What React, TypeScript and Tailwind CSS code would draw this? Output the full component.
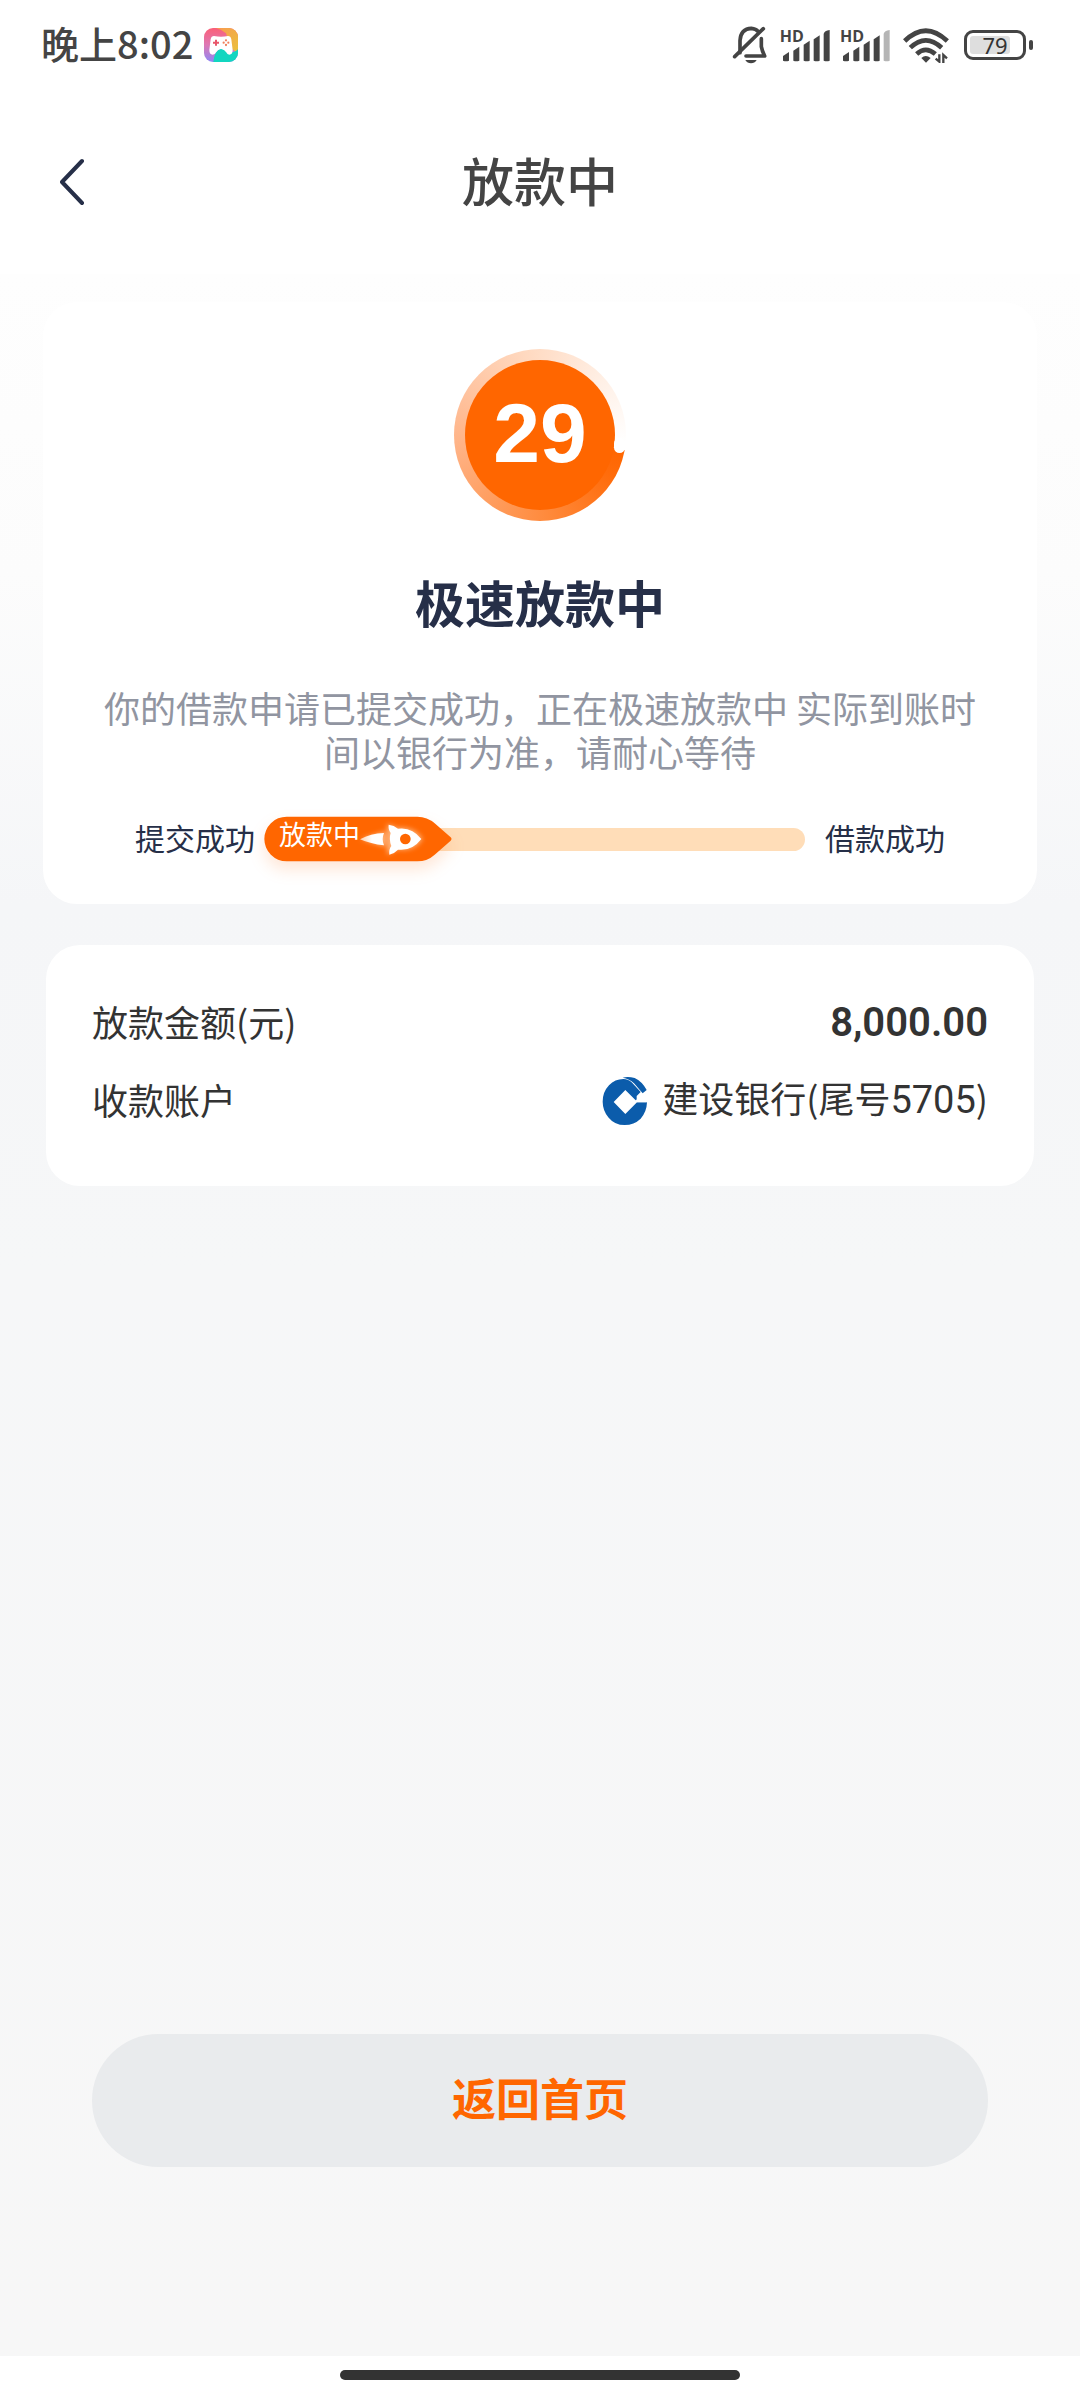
import React from "react";

function GameBadge() {
  return (
    <svg className="h-[34px] w-[34px] rounded-[9px]" viewBox="0 0 102 102" aria-hidden="true">
      <defs>
        <linearGradient id="gb" x1="0" y1="0" x2="0" y2="1">
          <stop offset="0" stopColor="#fb5f78" />
          <stop offset="0.5" stopColor="#dd78b4" />
          <stop offset="1" stopColor="#8f86f5" />
        </linearGradient>
        <linearGradient id="gy" x1="0" y1="0" x2="1" y2="1">
          <stop offset="0" stopColor="#f99a52" />
          <stop offset="1" stopColor="#e9c23c" />
        </linearGradient>
      </defs>
      <rect width="102" height="102" fill="url(#gb)" />
      <path d="M36 0H102V76L80 60L66 16Q52 4 36 0Z" fill="url(#gy)" />
      <path d="M28 102Q32 66 51 63Q68 64 76 74Q92 74 102 64V102Z" fill="#12d6c0" />
      <path
        d="M30 24Q51 28 72 24Q80 24 82 34L86 66Q86 80 76 80Q70 80 66 72Q60 64 51 64Q42 64 37 72Q33 80 26 80Q16 80 16 66L20 34Q22 24 30 24Z"
        fill="#fff"
      />
      <path d="M51 63Q40 66 36 76Q44 84 51 84Q60 84 67 76Q62 66 51 63Z" fill="#12d6c0" />
      <path d="M36 35V53M27 44H45" stroke="#e8566a" strokeWidth="6" />
      <g fill="#f0805c">
        <circle cx="66" cy="37" r="3.4" />
        <circle cx="66" cy="51" r="3.4" />
        <circle cx="59" cy="44" r="3.4" />
        <circle cx="73" cy="44" r="3.4" />
      </g>
    </svg>
  );
}

function BellOff() {
  return (
    <svg className="h-[38px] w-[36px]" viewBox="0 0 108 114" fill="none" aria-hidden="true">
      <path
        d="M24 80V44Q26 8 58 7Q72 8 78 16M88 38V62Q90 74 98 90H42"
        stroke="#444"
        strokeWidth="11"
        strokeLinejoin="round"
        strokeLinecap="round"
      />
      <path d="M8 92L94 8" stroke="#444" strokeWidth="11" strokeLinecap="round" />
      <path d="M40 102H74Q68 112 57 112Q46 112 40 102Z" fill="#444" />
    </svg>
  );
}

function Signal({ last }: { last: string }) {
  return (
    <div className="flex items-start">
      <span className="-mr-[23px] font-['Open_Sans','Noto_Sans',sans-serif] text-[16px] leading-[16px] font-bold text-[#444]">
        HD
      </span>
      <svg className="h-[34px] w-[50px]" viewBox="0 0 150 102" aria-hidden="true">
        <g fill="#444">
          <path d="M6 98V84L24 72V98Q15 101 6 98Z" />
          <path d="M37 98V68L55 56V98Q46 101 37 98Z" />
          <path d="M68 98V50L86 38V98Q77 101 68 98Z" />
          <path d="M98 98V34L116 22V98Q107 101 98 98Z" />
        </g>
        <path d="M128 98V18Q130 8 146 6V98Q137 101 128 98Z" fill={last} />
      </svg>
    </div>
  );
}

function Wifi() {
  return (
    <svg className="h-[36px] w-[46px]" viewBox="0 0 138 108" fill="none" aria-hidden="true">
      <g stroke="#444" strokeWidth="14">
        <path d="M5 42Q68 -20 133 42" />
        <path d="M22 62Q68 18 116 62" />
        <path d="M41 81Q68 56 97 81" />
      </g>
      <path d="M55 93Q68 81 83 93L69 107Z" fill="#444" />
      <path d="M109 82V104L98 95M121 108V84L132 94" stroke="#444" strokeWidth="7" />
    </svg>
  );
}

function Battery() {
  return (
    <div className="ml-[3px] flex items-center gap-[3px]">
      <div className="flex h-[30px] w-[62px] rounded-[9px] border-3 border-[#444] p-[3px]">
        <div className="flex w-[40px] items-center justify-center rounded-[3px] bg-[#dedede] pl-[10px]">
          <span className="font-['Noto_Sans','Open_Sans',sans-serif] text-[22px] leading-[18px] text-[#333]">79</span>
        </div>
      </div>
      <div className="h-[10px] w-[4px] rounded-[2px] bg-[#444]" />
    </div>
  );
}

function StatusBar() {
  return (
    <div className="flex h-[90px] items-center justify-between pr-[47px] pl-[41px]">
      <div className="flex items-center gap-[11px]">
        <span className="pb-1 text-[38px] leading-[44px] font-medium text-[#444]">晚上8:02</span>
        <GameBadge />
      </div>
      <div className="flex items-center gap-[12px]">
        <BellOff />
        <div className="flex gap-[9px]">
          <Signal last="#444" />
          <Signal last="#b5b5b5" />
        </div>
        <Wifi />
        <Battery />
      </div>
    </div>
  );
}

function Countdown() {
  return (
    <div className="flex h-[172px] w-[172px] items-center justify-center rounded-full bg-[conic-gradient(from_100deg,#ff6600_0deg,#ff6c0b_20deg,#ff8a3c_75deg,#ffb488_165deg,#ffd9c0_250deg,#fff0e6_310deg,#ffffff_355deg,#ffffff_360deg)]">
      <div className="relative flex h-[150px] w-[150px] items-center justify-center rounded-full bg-[#ff6600]">
        <div className="absolute top-[78px] -right-[10px] h-[15px] w-[11px] rounded-full bg-white" />
        <span className="pb-1 font-['Liberation_Sans',Arial,sans-serif] text-[84px] leading-[84px] font-bold text-white">
          29
        </span>
      </div>
    </div>
  );
}

function RocketPill() {
  return (
    <div className="relative z-10 -mr-[20px] h-[46px] w-[189px] shrink-0">
      <svg
        className="absolute inset-0 h-[46px] w-[189px] overflow-visible drop-shadow-[0_8px_8px_rgba(255,102,0,0.16)]"
        viewBox="0 0 567 138"
        aria-hidden="true"
      >
        <defs>
          <filter id="glow" x="-50%" y="-50%" width="200%" height="200%">
            <feGaussianBlur stdDeviation="8" />
          </filter>
          <linearGradient id="flame" x1="0" x2="1">
            <stop offset="0" stopColor="#ffd0ac" />
            <stop offset="0.5" stopColor="#fff" />
          </linearGradient>
        </defs>
        <path
          d="M68 2H460Q490 2 512 22L560 64Q565 69 560 74L512 116Q490 136 460 136H68A67 67 0 0 1 68 2Z"
          fill="#ff6600"
        />
        <g filter="url(#glow)" fill="#ffb47c">
          <path d="M290 69L365 46V92Z" />
          <path d="M370 24L400 36Q450 30 476 69Q450 108 400 100L370 116Z" />
        </g>
        <path d="M288 70Q320 52 360 51Q352 70 360 88Q320 84 288 70Z" fill="url(#flame)" />
        <path
          d="M374 26Q390 28 402 38Q444 32 472 69Q444 106 402 101Q392 112 376 116Q374 100 382 90Q374 69 380 51Q372 40 374 26Z"
          fill="#fff"
        />
        <circle cx="424" cy="69" r="16" fill="#ff6600" />
      </svg>
      <span className="relative block pl-[15px] text-[27px] leading-[36px] text-white">放款中</span>
    </div>
  );
}

function BankLogo() {
  return (
    <svg className="h-[50px] w-[46px]" viewBox="0 0 138 150" aria-hidden="true">
      <path
        d="M64 9Q80 10 89 19L116 48L104 60L104 79H135Q134 108 116 128Q96 147 68 147Q38 147 20 125Q2 104 2 77Q2 48 21 28Q39 9 64 9Z"
        fill="#0b5cab"
      />
      <path d="M70 42L101 73L124 56L134 79H105L70 114L35 78Z" fill="#fff" />
      <path d="M62 5Q78 1 98 6Q120 16 134 42L122 52L96 22Q82 8 62 5Z" fill="#0b5cab" />
    </svg>
  );
}

export default function App() {
  return (
    <div className="flex min-h-screen flex-col bg-white font-['Noto_Sans_CJK_SC',sans-serif]" lang="zh-CN">
      <StatusBar />
      <header className="grid h-[184px] grid-cols-[1fr_auto_1fr] items-center px-[49px]">
        <button type="button" aria-label="返回" className="flex h-[64px] w-[48px] items-center justify-center">
          <svg className="h-[48px] w-[26px]" viewBox="0 0 26 48" fill="none" aria-hidden="true">
            <path d="M22 3L2 24L22 45" stroke="#262f48" strokeWidth="4" strokeLinecap="round" strokeLinejoin="round" />
          </svg>
        </button>
        <h1 className="pb-1 text-[52px] leading-[60px] font-medium text-[#444]">放款中</h1>
      </header>

      <main className="flex flex-1 flex-col bg-[linear-gradient(180deg,#fefefe_0px,#fcfcfc_300px,#f5f6f8_630px,#f6f7f8_1000px,#f7f7f7_100%)] pt-[28px]">
        <section className="mx-[43px] flex flex-col items-center rounded-[34px] bg-white px-[56px] pt-[47px] pb-[42px]">
          <Countdown />
          <h2 className="mt-[50px] text-[50px] leading-[60px] font-bold text-[#262f48]">极速放款中</h2>
          <p className="mt-[54px] text-center text-[36px] leading-[44px] text-[#9195a1]">
            你的借款申请已提交成功，正在极速放款中 实际到账时间以银行为准，请耐心等待
          </p>
          <div className="mt-[43px] flex w-full items-center px-[36px]">
            <span className="mr-[9px] pb-1 text-[30px] leading-[40px] text-[#262f48]">提交成功</span>
            <RocketPill />
            <div className="h-[23px] flex-1 rounded-r-full bg-[#ffddb8]" />
            <span className="ml-[20px] pb-1 text-[30px] leading-[40px] text-[#262f48]">借款成功</span>
          </div>
        </section>

        <dl className="mx-[46px] mt-[41px] flex flex-col gap-[22px] rounded-[34px] bg-white px-[46px] pt-[51px] pb-[57px] text-[36px] leading-[50px] text-[#333]">
          <div className="flex items-center justify-between">
            <dt className="pb-1">放款金额(元)</dt>
            <dd className="font-[Roboto,sans-serif] text-[40px] font-semibold">8,000.00</dd>
          </div>
          <div className="flex items-center justify-between">
            <dt className="pb-1">收款账户</dt>
            <dd className="flex items-center gap-[14px]">
              <BankLogo />
              <span className="pb-1">
                建设银行(尾号<span className="font-[Roboto,sans-serif] text-[38px]">5705</span>)
              </span>
            </dd>
          </div>
        </dl>

        <div className="mt-auto px-[92px] pb-[189px]">
          <button
            type="button"
            className="h-[133px] w-full rounded-full bg-[#e9ebed] pb-2 text-[44px] leading-[60px] font-bold text-[#ff6600]"
          >
            返回首页
          </button>
        </div>
      </main>

      <footer className="flex h-[44px] items-center justify-center pb-[6px]">
        <div className="h-[10px] w-[37%] rounded-full bg-[#333]" />
      </footer>
    </div>
  );
}
